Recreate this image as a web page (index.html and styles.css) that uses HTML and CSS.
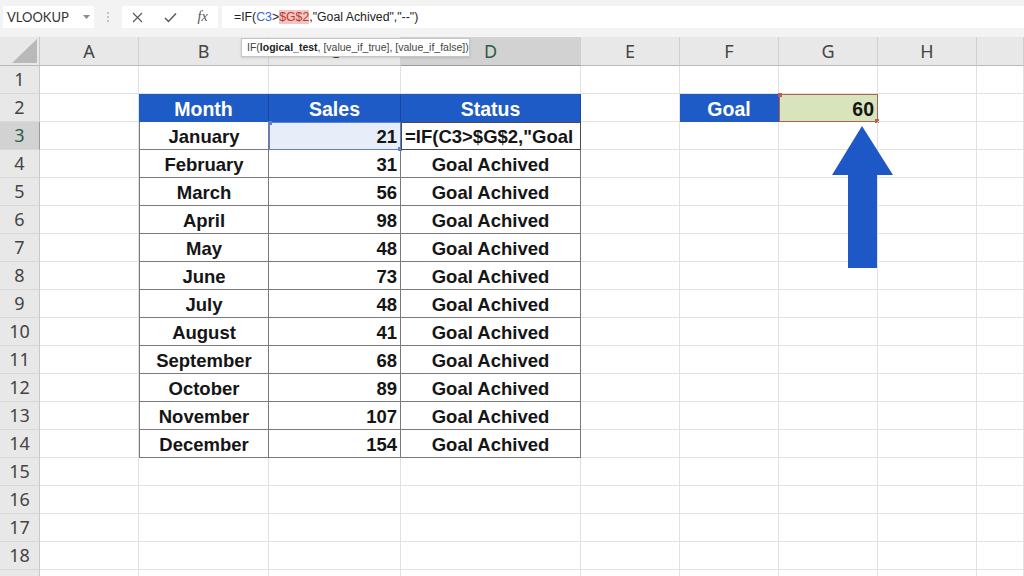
FILE: index.html
```html
<!DOCTYPE html>
<html>
<head>
<meta charset="utf-8">
<title>Excel IF</title>
<link rel="stylesheet" href="styles.css">
</head>
<body>
<div class="bar">
  <div class="namebox"><span>VLOOKUP</span><svg class="caret" width="7" height="4" viewBox="0 0 7 4"><path d="M0 0h7L3.5 4z" fill="#8a8a8a"/></svg></div>
  <div class="grip"><i></i><i></i><i></i></div>
  <div class="btns">
    <svg width="11" height="11" viewBox="0 0 11 11"><path d="M1 1L10 10M10 1L1 10" stroke="#5a5a5a" stroke-width="1.2" fill="none"/></svg>
    <svg width="13" height="11" viewBox="0 0 13 11"><path d="M1 6L4.5 9.5L12 1.5" stroke="#5a5a5a" stroke-width="1.5" fill="none"/></svg>
    <span class="fx">fx</span>
  </div>
  <div class="formula">=IF(<span class="ref1">C3</span>&gt;<span class="ref2">$G$2</span>,"Goal Achived","--")</div>
</div>

<div class="sheet">
  <div class="corner"><svg width="40" height="28" viewBox="0 0 40 28"><path d="M12 26H37V2z" fill="#b9b9b9"/></svg></div>
  <div class="ch">A</div><div class="ch">B</div><div class="ch">C</div><div class="ch sel">D</div><div class="ch">E</div><div class="ch">F</div><div class="ch">G</div><div class="ch">H</div><div class="ch"></div>

  <div class="rh">1</div><div class="c"></div><div class="c"></div><div class="c"></div><div class="c"></div><div class="c"></div><div class="c"></div><div class="c"></div><div class="c"></div><div class="c"></div>

  <div class="rh">2</div><div class="c"></div><div class="c th">Month</div><div class="c th">Sales</div><div class="c th">Status</div><div class="c"></div><div class="c th goal">Goal</div><div class="c gval">60</div><div class="c"></div><div class="c"></div>

  <div class="rh sel">3</div><div class="c"></div><div class="c td m">January</div><div class="c td n ref">21</div><div class="c td edit">=IF(C3&gt;$G$2,"Goal</div><div class="c"></div><div class="c"></div><div class="c"></div><div class="c"></div><div class="c"></div>

  <div class="rh">4</div><div class="c"></div><div class="c td m">February</div><div class="c td n">31</div><div class="c td s">Goal Achived</div><div class="c"></div><div class="c"></div><div class="c"></div><div class="c"></div><div class="c"></div>

  <div class="rh">5</div><div class="c"></div><div class="c td m">March</div><div class="c td n">56</div><div class="c td s">Goal Achived</div><div class="c"></div><div class="c"></div><div class="c"></div><div class="c"></div><div class="c"></div>

  <div class="rh">6</div><div class="c"></div><div class="c td m">April</div><div class="c td n">98</div><div class="c td s">Goal Achived</div><div class="c"></div><div class="c"></div><div class="c"></div><div class="c"></div><div class="c"></div>

  <div class="rh">7</div><div class="c"></div><div class="c td m">May</div><div class="c td n">48</div><div class="c td s">Goal Achived</div><div class="c"></div><div class="c"></div><div class="c"></div><div class="c"></div><div class="c"></div>

  <div class="rh">8</div><div class="c"></div><div class="c td m">June</div><div class="c td n">73</div><div class="c td s">Goal Achived</div><div class="c"></div><div class="c"></div><div class="c"></div><div class="c"></div><div class="c"></div>

  <div class="rh">9</div><div class="c"></div><div class="c td m">July</div><div class="c td n">48</div><div class="c td s">Goal Achived</div><div class="c"></div><div class="c"></div><div class="c"></div><div class="c"></div><div class="c"></div>

  <div class="rh">10</div><div class="c"></div><div class="c td m">August</div><div class="c td n">41</div><div class="c td s">Goal Achived</div><div class="c"></div><div class="c"></div><div class="c"></div><div class="c"></div><div class="c"></div>

  <div class="rh">11</div><div class="c"></div><div class="c td m">September</div><div class="c td n">68</div><div class="c td s">Goal Achived</div><div class="c"></div><div class="c"></div><div class="c"></div><div class="c"></div><div class="c"></div>

  <div class="rh">12</div><div class="c"></div><div class="c td m">October</div><div class="c td n">89</div><div class="c td s">Goal Achived</div><div class="c"></div><div class="c"></div><div class="c"></div><div class="c"></div><div class="c"></div>

  <div class="rh">13</div><div class="c"></div><div class="c td m">November</div><div class="c td n">107</div><div class="c td s">Goal Achived</div><div class="c"></div><div class="c"></div><div class="c"></div><div class="c"></div><div class="c"></div>

  <div class="rh">14</div><div class="c"></div><div class="c td m">December</div><div class="c td n">154</div><div class="c td s">Goal Achived</div><div class="c"></div><div class="c"></div><div class="c"></div><div class="c"></div><div class="c"></div>

  <div class="rh">15</div><div class="c"></div><div class="c"></div><div class="c"></div><div class="c"></div><div class="c"></div><div class="c"></div><div class="c"></div><div class="c"></div><div class="c"></div>

  <div class="rh">16</div><div class="c"></div><div class="c"></div><div class="c"></div><div class="c"></div><div class="c"></div><div class="c"></div><div class="c"></div><div class="c"></div><div class="c"></div>

  <div class="rh">17</div><div class="c"></div><div class="c"></div><div class="c"></div><div class="c"></div><div class="c"></div><div class="c"></div><div class="c"></div><div class="c"></div><div class="c"></div>

  <div class="rh">18</div><div class="c"></div><div class="c"></div><div class="c"></div><div class="c"></div><div class="c"></div><div class="c"></div><div class="c"></div><div class="c"></div><div class="c"></div>

  <div class="rh"></div><div class="c"></div><div class="c"></div><div class="c"></div><div class="c"></div><div class="c"></div><div class="c"></div><div class="c"></div><div class="c"></div><div class="c"></div>
</div>

<div class="tip">IF(<b>logical_test</b>, [value_if_true], [value_if_false])</div>

<svg class="arrow" width="61" height="142" viewBox="0 0 61 142"><path d="M30 0L61 49H45V142H16V49H0z" fill="#1e58c6"/></svg>
</body>
</html>
```

FILE: styles.css
```css
* { box-sizing: border-box; }
html, body { margin: 0; padding: 0; }
body {
  width: 1024px;
  height: 576px;
  overflow: hidden;
  background: #fff;
  position: relative;
  font-family: "Liberation Sans", Arial, sans-serif;
}

/* formula bar */
.bar {
  height: 37px;
  background: #f3f3f3;
  display: flex;
  align-items: center;
  padding: 0 0 3px 3px;
}
.namebox {
  width: 91px;
  height: 22px;
  background: #fff;
  display: flex;
  align-items: center;
  justify-content: space-between;
  padding: 0 4px 0 4px;
  font-family: "Lato", "Liberation Sans", sans-serif;
  font-size: 13px;
  color: #333;
}
.grip {
  width: 28px;
  display: flex;
  flex-direction: column;
  align-items: center;
  gap: 2px;
}
.grip i {
  width: 2px;
  height: 2px;
  background: #c2c2c2;
}
.btns {
  width: 96px;
  height: 22px;
  background: #fff;
  display: flex;
  align-items: center;
  justify-content: space-around;
}
.fx {
  font-family: "Liberation Serif", serif;
  font-style: italic;
  font-size: 14px;
  color: #555;
}
.formula {
  margin-left: 4px;
  flex: 1;
  height: 22px;
  background: #fff;
  padding-left: 12px;
  font-family: "Liberation Sans", Arial, sans-serif;
  font-size: 12.3px;
  line-height: 22px;
  color: #222;
  white-space: nowrap;
}
.ref1 { color: #3b67cf; }
.ref2 { color: #c0392b; background: #f0c6c6; }

/* sheet */
.sheet {
  display: grid;
  grid-template-columns: 40px 99px 130px 132px 180px 99px 99px 99px 99px 47px;
  grid-template-rows: 29px;
  grid-auto-rows: 28px;
}
.corner {
  background: #e8e8e8;
  border-right: 1px solid #c8c8c8;
  border-bottom: 1px solid #bababa;
}
.corner svg { display: block; }
.ch {
  background: #e8e8e8;
  border-right: 1px solid #d0d0d0;
  border-bottom: 1px solid #bababa;
  font-family: "Noto Sans", sans-serif;
  font-size: 18px;
  line-height: 28px;
  color: #444;
  text-align: center;
}
.ch.sel {
  background: #d2d2d2;
  color: #2c5c44;
  border-bottom: 1px solid #9a9a9a;
}
.rh {
  background: #e8e8e8;
  border-right: 1px solid #c8c8c8;
  border-bottom: 1px solid #d8d8d8;
  font-family: "Noto Sans", sans-serif;
  font-size: 18px;
  line-height: 27px;
  color: #444;
  text-align: center;
}
.rh.sel {
  background: #d2d2d2;
  color: #2c5c44;
  border-right: 1px solid #9a9a9a;
}
.c {
  border-right: 1px solid #e1e1e1;
  border-bottom: 1px solid #e1e1e1;
  position: relative;
}

/* table */
.th {
  background: #1e5bc6;
  color: #fff;
  font-weight: bold;
  font-size: 19.5px;
  line-height: 30px;
  text-align: center;
  border-right: 1px solid #19469f;
  border-bottom: 1px solid #1e5bc6;
}
.td {
  border-right: 1px solid #7a7a7a;
  border-bottom: 1px solid #7a7a7a;
  font-weight: bold;
  font-size: 18.5px;
  line-height: 30px;
  color: #151515;
  white-space: nowrap;
}
.m { text-align: center; border-left: 1px solid #7a7a7a; }
.s { text-align: center; }
.n { text-align: right; padding-right: 3px; }
.ref {
  background: #e7edf9;
  border: 1px solid #5a80d6;
  line-height: 28px;
}
.ref::before, .ref::after, .gval::before, .gval::after {
  content: "";
  position: absolute;
  width: 4px;
  height: 4px;
}
.ref::before, .ref::after { background: #5a80d6; }
.ref::before { left: -2px; top: -2px; }
.ref::after { right: -2px; bottom: -2px; }
.edit {
  padding-left: 3px;
  overflow: hidden;
  border: 1px solid #4a4a4a;
  line-height: 28px;
}
.goal { border-right: 1px solid #1e5bc6; }
.gval {
  background: #d8e4bc;
  border: 1px solid #b5614e;
  text-align: right;
  padding-right: 3px;
  font-weight: bold;
  font-size: 19.5px;
  line-height: 28px;
  color: #151515;
}
.gval::before, .gval::after { background: #b5614e; }
.gval::before { left: -2px; top: -2px; }
.gval::after { right: -2px; bottom: -2px; }

/* overlays */
.tip {
  position: absolute;
  left: 241px;
  top: 38px;
  height: 19px;
  width: 229px;
  background: #fff;
  border: 1px solid #c6c6c6;
  box-shadow: 0 1px 2px rgba(0,0,0,0.12);
  padding: 0 5px;
  font-family: "Liberation Sans", Arial, sans-serif;
  font-size: 10.5px;
  line-height: 17px;
  color: #444;
  white-space: nowrap;
  overflow: hidden;
}
.tip b { color: #222; }
.arrow {
  position: absolute;
  left: 832px;
  top: 126px;
}
```
